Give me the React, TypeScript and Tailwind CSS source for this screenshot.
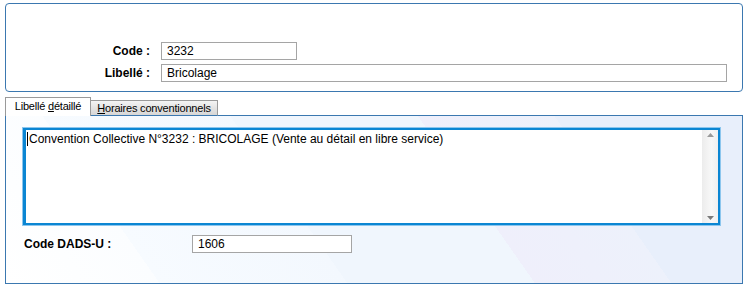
import React from "react";

export default function App() {
  return (
    <div
      className="relative w-[749px] h-[287px] bg-white text-[12px] text-black overflow-hidden"
      style={{ fontFamily: '"Liberation Sans", Arial, sans-serif' }}
    >
      {/* Top panel */}
      <div className="ml-[5px] mt-[3px] w-[738px] h-[89px] border border-[#3b78b0] rounded-[4px]">
        <div className="pt-[38px] flex flex-col gap-[4px]">
          <div className="flex items-center">
            <div className="w-[144px] text-right font-bold leading-[18px]">Code :</div>
            <div className="ml-[11px] w-[136px] h-[18px] border border-[#a5a5a5] px-[5px] leading-[16px]">3232</div>
          </div>
          <div className="flex items-center">
            <div className="w-[144px] text-right font-bold leading-[18px]">Libellé :</div>
            <div className="ml-[11px] w-[566px] h-[18px] border border-[#a5a5a5] px-[5px] leading-[16px]">Bricolage</div>
          </div>
        </div>
      </div>

      {/* Tabs */}
      <div className="relative mt-[5px] ml-[5px] w-[738px] h-[191px]">
        <div className="flex items-end h-[19px] relative z-10 text-[11px] whitespace-nowrap">
          <div className="w-[86px] h-[19px] bg-white border border-b-0 border-[#9a9a9a] text-center leading-[15px] pt-[1px] tracking-[-0.2px]">
            Libellé <span className="underline">d</span>étaillé
          </div>
          <div className="w-[127px] h-[16px] border border-l-0 border-[#9a9a9a] border-b-[#3b78b0] bg-[linear-gradient(180deg,#f4f4f4_0%,#e4e4e4_50%,#d6d6d6_100%)] text-center leading-[15px] tracking-[-0.2px]">
            <span className="underline">H</span>oraires conventionnels
          </div>
        </div>
        <div className="absolute left-[91px] right-0 top-[18px] h-[1px] bg-[#3b78b0]" />
        <div className="w-[738px] h-[168px] border border-t-0 border-[#3b78b0] bg-[linear-gradient(55deg,#ffffff_0%,#fbfdff_18%,#f7fbff_18%,#f3f8fe_40%,#f0f6fd_40%,#f0f6fd_62%,#efeffb_62%,#edf1fb_78%,#e8effb_78%,#e8effb_100%)]">
          <div className="pt-[11px] pl-[16px]">
            <div className="w-[699px] h-[99px] border border-[#8cc6ee] bg-white">
              <div className="w-full h-full border-2 border-[#0b86d3] border-l-[3px] flex">
                <div className="flex-1 relative pl-[3px] pt-[1px] leading-[16px]">
                  <span className="absolute left-[1px] top-[2px] w-[1px] h-[14px] bg-black" />
                  Convention Collective N°3232 : BRICOLAGE (Vente au détail en libre service)
                </div>
                <div className="w-[16px] h-full bg-[linear-gradient(90deg,#ececec_0%,#f8f8f8_60%,#f0f0f0_100%)] flex flex-col items-center justify-between py-[3px]">
                  <svg width="7" height="4" viewBox="0 0 7 4"><path d="M0 4 L3.5 0 L7 4 Z" fill="#9a9a9a" /></svg>
                  <svg width="7" height="4" viewBox="0 0 7 4"><path d="M0 0 L3.5 4 L7 0 Z" fill="#7a7a7a" /></svg>
                </div>
              </div>
            </div>
            <div className="flex items-center mt-[9px]">
              <div className="w-[170px] pl-[2px] font-bold leading-[18px]">Code DADS-U :</div>
              <div className="w-[160px] h-[18px] border border-[#a5a5a5] bg-white px-[5px] leading-[16px]">1606</div>
            </div>
          </div>
        </div>
      </div>
    </div>
  );
}
